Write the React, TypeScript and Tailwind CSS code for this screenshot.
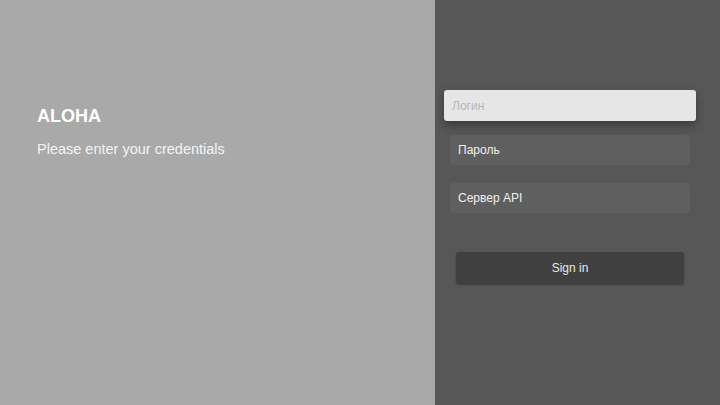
export default function App() {
  const font = { fontFamily: '"Liberation Sans", Arial, sans-serif' };
  return (
    <div className="flex w-[720px] h-[405px] overflow-hidden" style={font}>
      <div className="w-[435px] h-full bg-[#a9a9a9] pl-[37px] pt-[105px]">
        <h1 className="text-[18px] leading-[22px] font-bold text-white">ALOHA</h1>
        <p className="mt-[13px] text-[14.5px] leading-[18px] text-[#f4f4f4]">Please enter your credentials</p>
      </div>
      <div className="flex-1 h-full bg-[#575757] pl-[15px] pr-[30px] pt-[90px] flex flex-col">
        <div className="-mx-[6px] h-[31px] rounded-[3px] bg-[#e6e6e6] shadow-[0_4px_10px_rgba(0,0,0,0.35)] flex items-center px-[8px] text-[12px] text-[#b8b8b8]">
          Логин
        </div>
        <div className="mt-[14px] h-[30px] rounded-[3px] bg-[#5f5f5f] flex items-center px-[8px] text-[12px] text-[#f0f0f0]">
          Пароль
        </div>
        <div className="mt-[18px] h-[30px] rounded-[3px] bg-[#5f5f5f] flex items-center px-[8px] text-[12px] text-[#f0f0f0]">
          Сервер API
        </div>
        <button className="mt-[39px] mx-[6px] h-[32px] rounded-[3px] bg-[#404040] shadow-[0_1px_2px_rgba(0,0,0,0.3)] flex items-center justify-center text-[12px] text-[#e8e8e8]">
          Sign in
        </button>
      </div>
    </div>
  );
}
